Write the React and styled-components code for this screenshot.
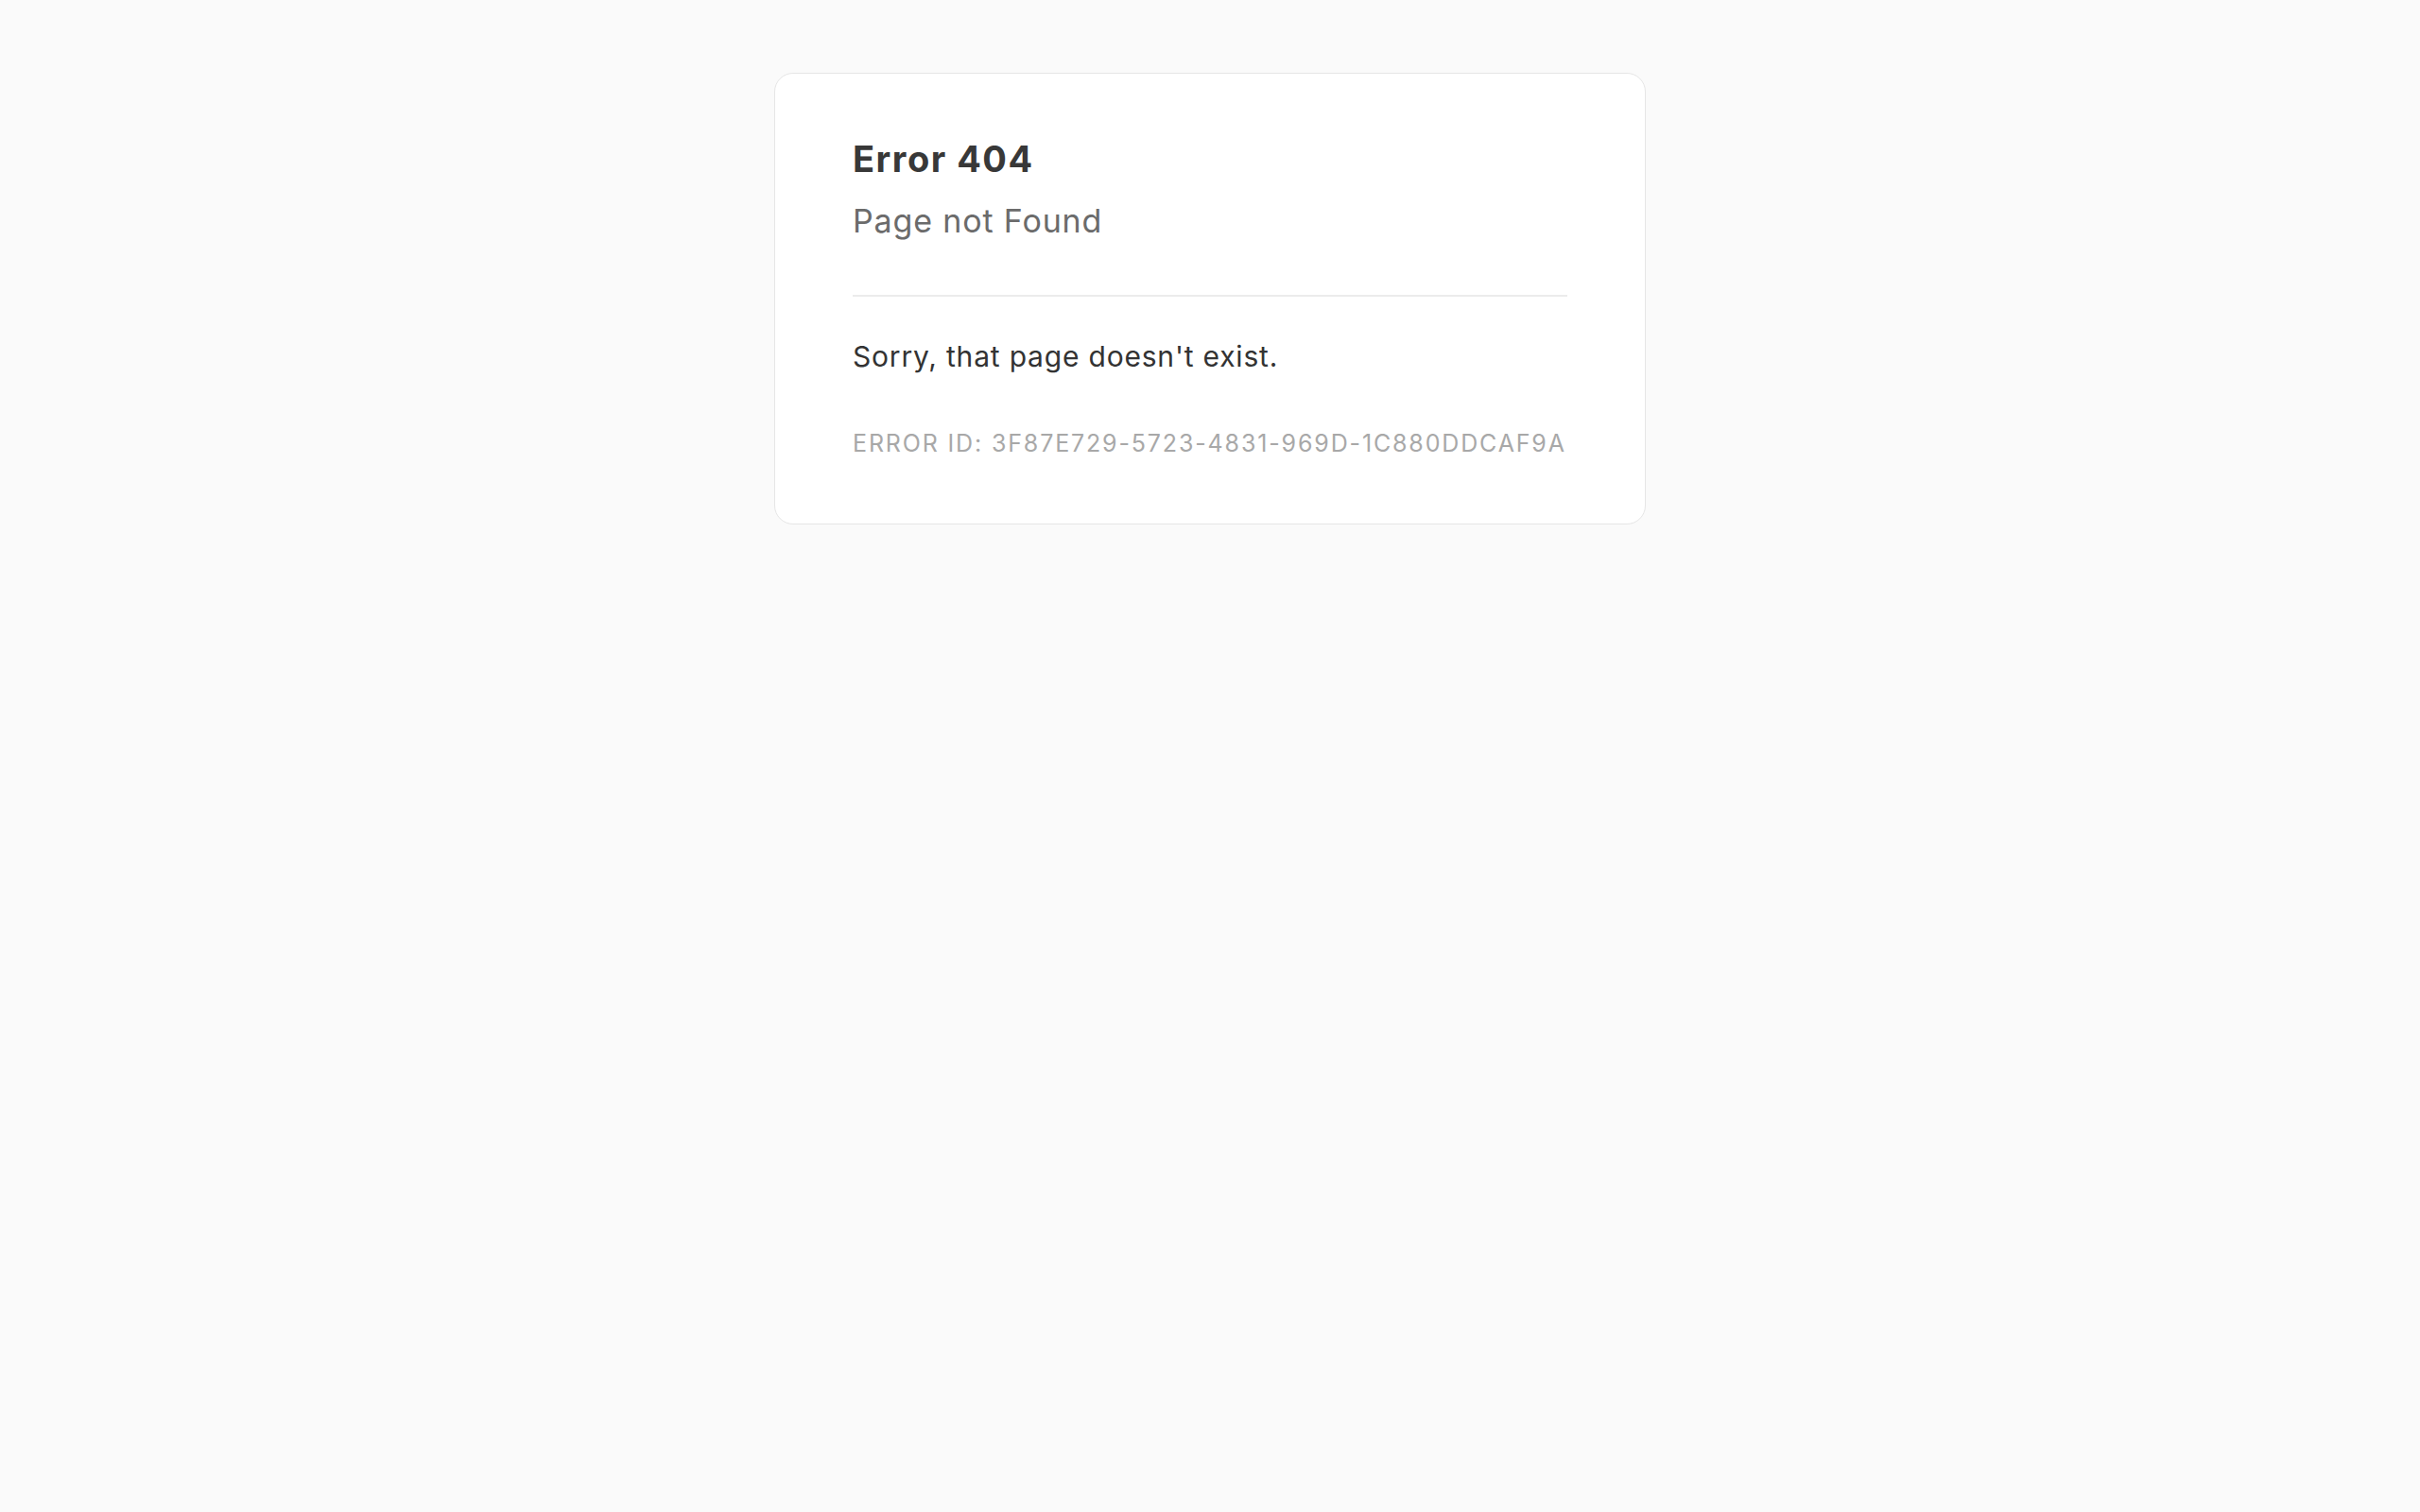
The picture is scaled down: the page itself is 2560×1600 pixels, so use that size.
import React from 'react';
import styled, { createGlobalStyle } from 'styled-components';

const GlobalStyle = createGlobalStyle`
  html, body {
    margin: 0;
    padding: 0;
    background: #fafafa;
  }
  body {
    font-family: Inter, "Noto Sans", "Liberation Sans", sans-serif;
    -webkit-font-smoothing: antialiased;
  }
`

const PageSC = styled.main`
  display: flex;
  justify-content: center;
  padding-top: 77px;
  min-height: 100vh;
  box-sizing: border-box;
`

const CardSC = styled.section`
  width: 922px;
  box-sizing: border-box;
  padding: 67px 82px 70px;
  background: #ffffff;
  border: 1px solid #e6e6e6;
  border-radius: 20px;
  align-self: flex-start;
`

const TitleSC = styled.h1`
  margin: 0;
  font-size: 38px;
  line-height: 46px;
  font-weight: 700;
  letter-spacing: 1.5px;
  color: #383838;
`

const SubtitleSC = styled.h2`
  margin: 22px 0 0;
  font-size: 34px;
  line-height: 41px;
  font-weight: 400;
  letter-spacing: 0.85px;
  color: #6b6b6b;
`

const DividerSC = styled.hr`
  margin: 58px 0 0;
  border: none;
  border-top: 2px solid #ececec;
`

const MessageSC = styled.p`
  margin: 45px 0 0;
  font-size: 30px;
  line-height: 36px;
  letter-spacing: 0.8px;
  color: #333333;
`

const ErrorIdSC = styled.p`
  margin: 60px 0 0;
  font-size: 25px;
  line-height: 29px;
  letter-spacing: 1.85px;
  white-space: nowrap;
  color: #a8a8a8;
`

export default function App() {
  return (
    <>
      <GlobalStyle />
      <PageSC>
        <CardSC>
          <TitleSC>Error 404</TitleSC>
          <SubtitleSC>Page not Found</SubtitleSC>
          <DividerSC />
          <MessageSC>Sorry, that page doesn't exist.</MessageSC>
          <ErrorIdSC>ERROR ID: 3F87E729-5723-4831-969D-1C880DDCAF9A</ErrorIdSC>
        </CardSC>
      </PageSC>
    </>
  )
}
